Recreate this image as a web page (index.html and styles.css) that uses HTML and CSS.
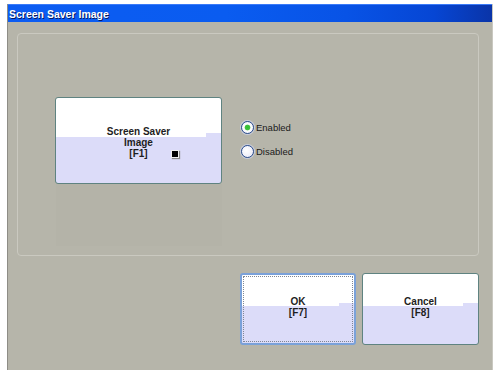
FILE: index.html
```html
<!DOCTYPE html>
<html lang="en">

<head>
    <meta charset="UTF-8">
    <meta name="viewport" content="width=device-width, initial-scale=1.0">
    <title>Screen Saver Image</title>
    <link rel="stylesheet" href="styles.css">
</head>

<body>
    <div class="window">
        <div class="titleBar">Screen Saver Image</div>

        <div class="client">
            <div class="groupBox">
                <div class="keyBtn imageBtn">
                    <span>Screen Saver<br>Image<br>[F1]</span>
                    <span class="stopMark"></span>
                </div>

                <div class="radioList">
                    <label class="radioItem"><span class="radioDot checked"></span>Enabled</label>
                    <label class="radioItem"><span class="radioDot"></span>Disabled</label>
                </div>

                <div class="ghostBox"></div>
            </div>

            <div class="actions">
                <div class="keyBtn actionBtn focused"><span>OK<br>[F7]</span></div>
                <div class="keyBtn actionBtn cancelBtn"><span>Cancel<br>[F8]</span></div>
            </div>
        </div>
    </div>
</body>

</html>
```

FILE: styles.css
```css
html,
body {
    margin: 0;
    background-color: #ffffff;
}

body {
    padding: 4px 7px;
    font-family: "Liberation Sans", Arial, sans-serif;
}

.window {
    width: 486px;
    height: 366px;
    display: flex;
    flex-direction: column;
    background-color: #b6b5aa;
    border-left: 1px solid #8e8d86;
    border-right: 1px solid #c9c8c0;
    box-sizing: border-box;
}

.titleBar {
    height: 18px;
    line-height: 18px;
    padding-left: 1px;
    color: #ffffff;
    font-size: 10.5px;
    font-weight: bold;
    text-shadow: 1px 1px 0 #0a1a60;
    background: linear-gradient(to right, #0c5cf2 0%, #0a5cf0 45%, #0853e6 70%, #0646d4 88%, #0a34a8 100%);
    border-top: 1px solid #3a7af8;
    box-sizing: border-box;
}

.client {
    flex: 1;
    padding: 11px 13px 0 9px;
}

/* 그룹박스 */
.groupBox {
    position: relative;
    height: 223px;
    box-sizing: border-box;
    border: 1px solid #cac9c0;
    border-radius: 4px;
    padding: 63px 0 0 37px;
    display: flex;
    align-items: flex-start;
}

.ghostBox {
    position: absolute;
    left: 38px;
    top: 150px;
    width: 166px;
    height: 62px;
    background-color: rgba(0, 0, 0, 0.008);
}

/* 키 버튼 공통 */
.keyBtn {
    position: relative;
    display: flex;
    align-items: center;
    justify-content: center;
    text-align: center;
    box-sizing: border-box;
    border: 1px solid #5f8381;
    border-radius: 3px;
    font-size: 10px;
    font-weight: bold;
    line-height: 11px;
    color: #1e1e1e;
    background:
        linear-gradient(#ffffff 41%, #dcdcf9 41%) right top / 15px 100% no-repeat,
        linear-gradient(#ffffff 46%, #dcdcf9 46%);
}

.imageBtn {
    width: 167px;
    height: 87px;
    padding-top: 4px;
    z-index: 1;
}

.stopMark {
    position: absolute;
    left: 115px;
    top: 52px;
    width: 6px;
    height: 6px;
    background-color: #000000;
    border: 1px solid #eeeeee;
    box-shadow: 1px 1px 1px #888888;
}

/* 라디오 */
.radioList {
    display: flex;
    flex-direction: column;
    gap: 11px;
    margin-left: 19px;
    margin-top: 24px;
}

.radioItem {
    display: flex;
    align-items: center;
    font-size: 9.5px;
    color: #1a1a1a;
    height: 13px;
}

.radioDot {
    width: 13px;
    height: 13px;
    box-sizing: border-box;
    border-radius: 50%;
    border: 1px solid #2c4f92;
    background: radial-gradient(circle at 40% 40%, #ffffff 0%, #e6e6f6 100%);
    margin-right: 2px;
    box-shadow: 0 0 0 1px rgba(210, 215, 240, 0.7);
}

.radioDot.checked {
    background: radial-gradient(circle, #2fbf2f 0%, #42c242 32%, #ffffff 42%, #e6e6f6 100%);
}

/* 하단 버튼 */
.actions {
    display: flex;
    justify-content: flex-end;
    gap: 6px;
    margin-top: 17px;
}

.actionBtn {
    width: 116px;
    height: 72px;
    padding-bottom: 4px;
}

.cancelBtn {
    width: 117px;
}

.focused {
    border: 2px solid #7aa1d9;
    outline: 1px dotted #7f8794;
    outline-offset: -4px;
}
```
